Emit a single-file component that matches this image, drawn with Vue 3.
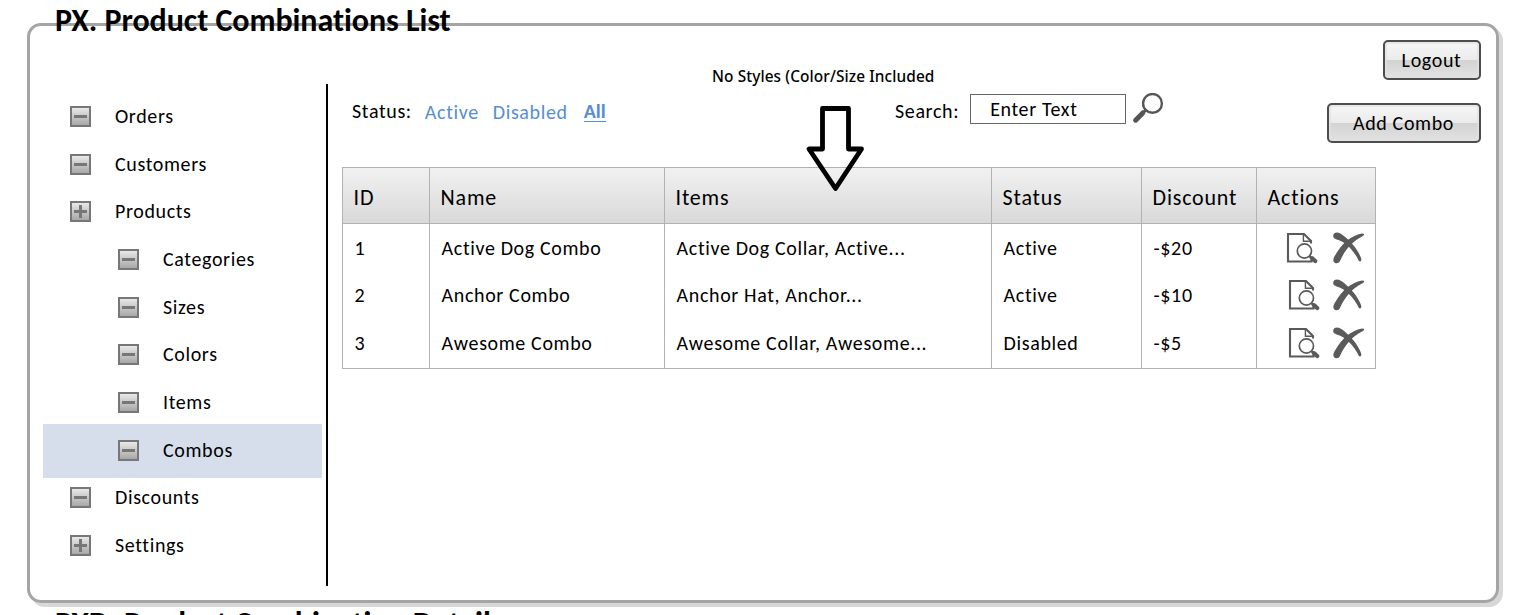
<script setup>
const menu = [
  { label: 'Orders' },
  { label: 'Customers' },
  { label: 'Products', plus: true },
  { label: 'Categories', child: true },
  { label: 'Sizes', child: true },
  { label: 'Colors', child: true },
  { label: 'Items', child: true },
  { label: 'Combos', child: true, active: true },
  { label: 'Discounts' },
  { label: 'Settings', plus: true },
]
const columns = ['ID', 'Name', 'Items', 'Status', 'Discount', 'Actions']
const combos = [
  ['1', 'Active Dog Combo', 'Active Dog Collar, Active...', 'Active', '-$20'],
  ['2', 'Anchor Combo', 'Anchor Hat, Anchor...', 'Active', '-$10'],
  ['3', 'Awesome Combo', 'Awesome Collar, Awesome...', 'Disabled', '-$5'],
]
</script>

<template>
  <div class="page">
    <section class="frame">
      <h1 class="title">PX. Product Combinations List</h1>
      <nav class="menu">
        <a v-for="m in menu" :key="m.label" class="item" :class="{ child: m.child, active: m.active }">
          <span class="toggle" :class="{ plus: m.plus }"></span>
          <span class="label">{{ m.label }}</span>
        </a>
      </nav>
      <main class="main">
        <header class="toolbar">
          <div class="filters">
            <span class="status">Status:</span>
            <a>Active</a>
            <a>Disabled</a>
            <a class="current">All</a>
          </div>
          <div class="search">
            <span>Search:</span>
            <div class="field">Enter Text</div>
            <svg class="lens" width="32" height="32" viewBox="0 0 32 32">
              <circle cx="20.5" cy="10.4" r="9.4" fill="none" stroke="#555" stroke-width="2.4" />
              <path d="M13.8 17L3.6 27.2" stroke="#555" stroke-width="2.8" />
              <path d="M10.8 20L3.6 27.2" stroke="#555" stroke-width="5" stroke-linecap="round" />
            </svg>
          </div>
          <div class="buttons">
            <button class="btn logout">Logout</button>
            <button class="btn add">Add Combo</button>
          </div>
        </header>
        <div class="table">
          <div class="row head">
            <div v-for="c in columns" :key="c" class="cell">{{ c }}</div>
          </div>
          <div v-for="row in combos" :key="row[0]" class="row">
            <div v-for="(v, i) in row" :key="i" class="cell">{{ v }}</div>
            <div class="cell actions">
              <svg class="doc" width="32" height="32" viewBox="0 0 32 32" fill="none" stroke="#5a5a5a">
                <path d="M25 11.5V9L18 2H2V29.5H25.5V27.5" stroke-width="2.1" />
                <path d="M17.4 2V9.2H24" stroke-width="1.4" />
                <circle cx="18.4" cy="19" r="7.1" stroke-width="1.7" />
                <path d="M23.4 24.2L26 26.5" stroke-width="2.4" />
                <path d="M26 26.2L29.2 29" stroke-width="4.2" stroke-linecap="round" />
              </svg>
              <svg class="cross" width="32" height="32" viewBox="0 0 32 32" fill="#5a5a5a">
                <path d="M.3 3.2C1 .2 4.6 0 7.4 1.6C15.5 6.4 25.2 17.6 28.2 26.4C28.8 29 27.2 30.4 25.7 28.7C21.5 19.5 12.8 9.4 3 7.2C.8 6.6 -.2 5 .3 3.2Z" />
                <path d="M30.8 1.7C31.6 2.8 30.6 3.8 29 4.5C19.6 9.4 12 17.4 7 29C5.6 32 1.6 31.8 .6 29.4C0 27.2 .8 25.2 2 23.4C9 11.6 17.6 3.6 29 1.5Z" />
              </svg>
            </div>
          </div>
        </div>
      </main>
    </section>
    <h1 class="title next">PXD. Product Combination Detail</h1>
    <div class="note">No Styles (Color/Size Included</div>
    <svg class="arrow" width="60" height="90" viewBox="0 0 60 90">
      <path d="M17.5 3.5H43.5V44H56.5L30.5 83.5L4 44H17.5Z" fill="none" stroke="#000" stroke-width="4.8" stroke-linejoin="round" />
    </svg>
  </div>
</template>

<style>
body { background: #fff; }
</style>

<style scoped>
* { box-sizing: border-box; }
.page {
  position: relative;
  width: 1517px;
  height: 615px;
  padding: 23px 0 0 27px;
  overflow: hidden;
  font-family: Carlito, Calibri, Lato, sans-serif;
  font-size: 20px;
  line-height: 24px;
  letter-spacing: 0.63px;
  font-variant-ligatures: none;
  color: #000;
}
.frame {
  position: relative;
  display: flex;
  width: 1472px;
  height: 580px;
  border: 3px solid #a5a5a5;
  border-radius: 14px;
  box-shadow: 4px 4px 0 #d8d8d8;
}
.title {
  position: absolute;
  left: 25px;
  top: -25px;
  margin: 0;
  font-size: 32px;
  line-height: 40px;
  font-weight: 700;
  letter-spacing: -0.05px;
  white-space: nowrap;
}
.title.next { left: 55px; top: 604px; }

.menu {
  width: 298px;
  height: 502px;
  margin-top: 58px;
  padding: 8.7px 4px 0 13px;
  border-right: 2px solid #000;
}
.item {
  display: flex;
  align-items: center;
  height: 47.67px;
  padding-left: 27px;
}
.item.child { padding-left: 75px; }
.item.active {
  height: 54px;
  margin: -2.66px 0 -3.66px;
  padding-bottom: 1px;
  background: #d5deea;
}
.label { margin-top: -1.2px; }
.toggle {
  position: relative;
  width: 21px;
  height: 21px;
  margin-right: 24px;
  border: 2px solid #777;
  background: linear-gradient(#e8e8e8, #a8a8a8);
}
.toggle::before,
.toggle.plus::after {
  content: "";
  position: absolute;
  left: 2px;
  top: 7px;
  width: 13px;
  height: 3px;
  background: #777;
}
.toggle.plus::after { transform: rotate(90deg); }

.main { flex: 1; padding: 0 15.5px 0 14px; }
.toolbar { display: flex; height: 141px; }
.filters { display: flex; width: 553px; padding: 73px 0 0 10px; }
.filters a { margin-right: 14px; color: #558ed5; }
.filters a:not(.current) { margin-top: 1px; }
.filters .status { margin-right: 13px; }
.filters .current {
  height: 23px;
  margin-left: 2px;
  line-height: 24px;
  font-weight: 700;
  letter-spacing: 0.1px;
  border-bottom: 1px solid #558ed5;
}
.search { display: flex; padding-top: 68px; line-height: 35px; }
.field {
  width: 156px;
  height: 30px;
  margin: 0 6px 0 11px;
  padding-left: 19px;
  border: 1px solid #666;
  line-height: 29px;
}
.lens { margin-top: -1px; }
.buttons {
  display: flex;
  flex-direction: column;
  align-items: flex-end;
  gap: 23px;
  margin-left: auto;
  padding-top: 14px;
}
.btn {
  height: 40px;
  padding: 0 0 1px;
  border: 2px solid #4d4d4d;
  border-radius: 5px;
  background: linear-gradient(#f6f6f6, #ebebeb 50%, #d3d3d3 51%, #e2e2e2);
  box-shadow: inset 0 0 0 2px rgba(225, 225, 225, 0.7);
  font: inherit;
  letter-spacing: inherit;
  color: #000;
}
.logout { width: 98px; }
.add { width: 154px; }

.table {
  width: 1034px;
  height: 202px;
  border: 1px solid #b2b2b2;
  background:
    linear-gradient(#b2b2b2, #b2b2b2) 86px 0 / 1px 100% no-repeat,
    linear-gradient(#b2b2b2, #b2b2b2) 321px 0 / 1px 100% no-repeat,
    linear-gradient(#b2b2b2, #b2b2b2) 648px 0 / 1px 100% no-repeat,
    linear-gradient(#b2b2b2, #b2b2b2) 798px 0 / 1px 100% no-repeat,
    linear-gradient(#b2b2b2, #b2b2b2) 913px 0 / 1px 100% no-repeat,
    linear-gradient(#b2b2b2, #b2b2b2) 0 55px / 100% 1px no-repeat,
    linear-gradient(#f1f1f1, #d9d9d9) 0 0 / 100% 55px no-repeat;
}
.row {
  display: grid;
  grid-template-columns: 87px 235px 327px 150px 115px 118px;
  align-items: center;
  height: 47.67px;
}
.head { height: 56px; padding-top: 4px; font-size: 22px; letter-spacing: 0.8px; }
.cell { padding-left: 11.6px; }
.head .cell { padding-left: 10.6px; }
.actions { display: flex; align-items: center; padding-left: 31px; }
.doc { position: relative; left: 0; }
.row:nth-child(2) .doc { left: -2px; }
.cross { margin-left: 13px; }

.note {
  position: absolute;
  left: 712px;
  top: 66px;
  font: 500 15.4px/22px "Noto Sans", "Open Sans", sans-serif;
  letter-spacing: 0.1px;
  white-space: nowrap;
}
.arrow { position: absolute; left: 805px; top: 105px; }
</style>
